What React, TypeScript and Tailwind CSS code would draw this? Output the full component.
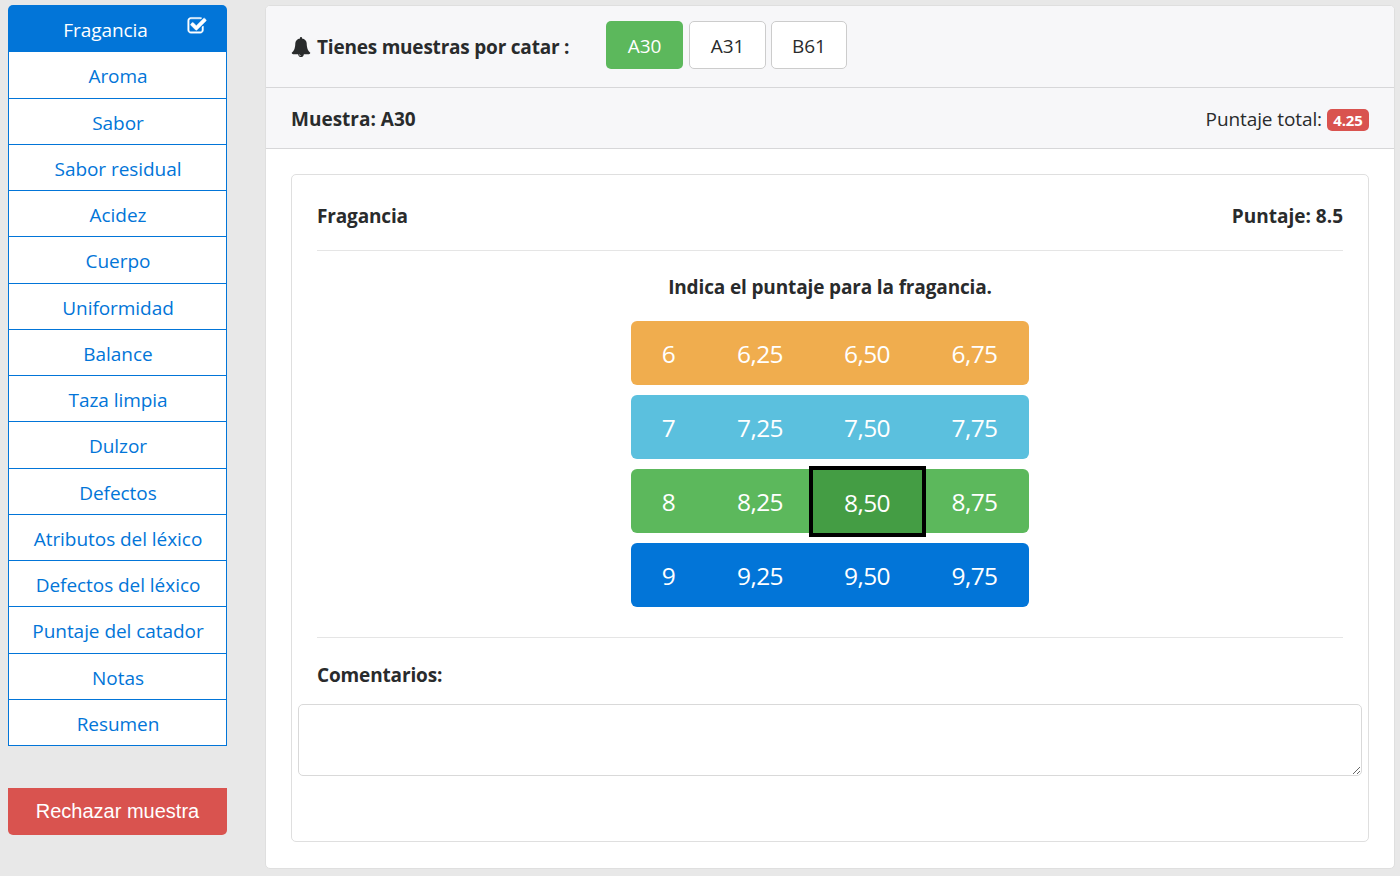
import React from "react";

const attributes = [
  "Aroma",
  "Sabor",
  "Sabor residual",
  "Acidez",
  "Cuerpo",
  "Uniformidad",
  "Balance",
  "Taza limpia",
  "Dulzor",
  "Defectos",
  "Atributos del léxico",
  "Defectos del léxico",
  "Puntaje del catador",
  "Notas",
  "Resumen",
];

const scores = [
  { color: "bg-[#f0ad4e]", values: ["6", "6,25", "6,50", "6,75"] },
  { color: "bg-[#5bc0de]", values: ["7", "7,25", "7,50", "7,75"] },
  { color: "bg-[#5cb85c]", values: ["8", "8,25", "8,50", "8,75"] },
  { color: "bg-[#0275d8]", values: ["9", "9,25", "9,50", "9,75"] },
];

function CheckIcon() {
  return (
    <svg
      viewBox="0 0 1792 1792"
      className="absolute top-[11px] right-[20px] size-5 fill-white stroke-white stroke-[40]"
    >
      <path d="M1472 930v318q0 119-84.5 203.5t-203.5 84.5h-832q-119 0-203.5-84.5t-84.5-203.5v-832q0-119 84.5-203.5t203.5-84.5h832q63 0 117 25 15 7 18 23 3 17-9 29l-49 49q-10 10-23 10-3 0-9-2-23-6-45-6h-832q-66 0-113 47t-47 113v832q0 66 47 113t113 47h832q66 0 113-47t47-113v-254q0-13 9-22l64-64q10-10 23-10 6 0 12 3 20 8 20 29zm231-489l-814 814q-24 24-57 24t-57-24l-430-430q-24-24-24-57t24-57l110-110q24-24 57-24t57 24l263 263 647-647q24-24 57-24t57 24l110 110q24 24 24 57t-24 57z" />
    </svg>
  );
}

function BellIcon() {
  return (
    <svg viewBox="0 0 1792 1792" className="size-5 fill-[#292b2c]">
      <path d="M912 1696q0-16-16-16-59 0-101.5-42.5t-42.5-101.5q0-16-16-16t-16 16q0 73 51.5 124.5t124.5 51.5q16 0 16-16zm816-288q0 52-38 90t-90 38h-448q0 106-75 181t-181 75-181-75-75-181h-448q-52 0-90-38t-38-90q50-42 91-88t85-119.5 74.5-158.5 50-206 19.5-260q0-152 117-282.5t307-158.5q-8-19-8-39 0-40 28-68t68-28 68 28 28 68q0 20-8 39 190 28 307 158.5t117 282.5q0 139 19.5 260t50 206 74.5 158.5 85 119.5 91 88z" />
    </svg>
  );
}

function Sidebar() {
  return (
    <aside className="w-[219px]">
      <nav className="flex flex-col text-center leading-[46px] tracking-[-0.05px]">
        <a className="relative h-[47.4px] rounded-t-[5px] bg-[#0275d8] pt-[2px] pr-[24px] text-white">
          Fragancia
          <CheckIcon />
        </a>
        {attributes.map((name) => (
          <a
            key={name}
            className="h-[46.25px] border-x border-b border-[#0275d8] bg-white pt-px pl-px text-[#0275d8]"
          >
            {name}
          </a>
        ))}
      </nav>
      <button className="mt-[42px] h-[47px] w-full rounded-b-[5px] bg-[#d9534f] pb-[2px] font-['Liberation_Sans',sans-serif] text-[20px] text-white">
        Rechazar muestra
      </button>
    </aside>
  );
}

function ScoreRow({ color, values }: { color: string; values: string[] }) {
  return (
    <div className={`grid h-16 w-[398px] grid-cols-[76px_107px_107px_108px] rounded-[6px] ${color}`}>
      {values.map((value) =>
        value === "8,50" ? (
          <button
            key={value}
            className="relative -mx-px mt-px h-[63px] bg-[#449d44] pt-[3px] pr-px text-center outline-4 outline-black"
          >
            {value}
          </button>
        ) : (
          <button key={value} className="pt-[2px] pr-px text-center">
            {value}
          </button>
        )
      )}
    </div>
  );
}

export default function App() {
  return (
    <div className="flex h-[876px] w-[1400px] gap-[38px] overflow-hidden bg-[#e8e8e8] pt-[5px] pl-2 font-['Open_Sans','Noto_Sans',sans-serif] text-[19px] text-[#292b2c]">
      <Sidebar />
      <main className="flex h-[864px] w-[1130px] flex-col rounded-[5px] border border-[#dfdfdf] bg-white">
        <header className="flex h-[82px] items-start rounded-t-[4px] border-b border-[#d7d7d9] bg-[#f7f7f9] pt-[15px] pl-[25px]">
          <div className="mt-[2px] flex h-12 w-[315px] items-center gap-[6px] font-bold tracking-[-0.21px]">
            <BellIcon />
            <span>Tienes muestras por catar :</span>
          </div>
          <div className="flex h-12 gap-[6px]">
            <button className="w-[77px] rounded-[5px] bg-[#5cb85c] pt-[2px] text-white">A30</button>
            <button className="w-[77px] rounded-[5px] border border-[#ccc] bg-white pt-[2px]">A31</button>
            <button className="-ml-px w-[76px] rounded-[5px] border border-[#ccc] bg-white pt-[2px]">B61</button>
          </div>
        </header>
        <div className="flex h-[61px] items-center justify-between border-b border-[#d7d7d9] bg-[#f7f7f9] px-[25px] pt-[2px]">
          <b className="font-bold">Muestra: A30</b>
          <div className="flex items-center gap-[5px] tracking-[-0.1px]">
            <span>Puntaje total:</span>
            <span className="mt-[2px] h-[22px] w-[42px] rounded-[5px] bg-[#d9534f] text-center text-[15px] leading-[23px] font-bold text-white">
              4.25
            </span>
          </div>
        </div>
        <section className="mx-[25px] mt-[25px] flex h-[668px] flex-col rounded-[5px] border border-[#dfdfdf]">
          <div className="mx-[25px] flex h-[76px] items-center justify-between border-b border-[#e5e5e5] pt-[7px] font-bold">
            <span className="tracking-[-0.15px]">Fragancia</span>
            <span>Puntaje: 8.5</span>
          </div>
          <div className="mx-[25px] flex h-[387px] flex-col items-center border-b border-[#e5e5e5]">
            <h4 className="mt-[22px] h-12 leading-[28px] font-bold tracking-[-0.14px]">
              Indica el puntaje para la fragancia.
            </h4>
            <div className="flex flex-col gap-[10px] text-[24.5px] tracking-[-0.6px] text-white">
              {scores.map((row) => (
                <ScoreRow key={row.color} {...row} />
              ))}
            </div>
          </div>
          <label className="mt-[23px] ml-[25px] h-[43px] leading-[28px] font-bold tracking-[-0.15px]">
            Comentarios:
          </label>
          <textarea className="mx-[6px] h-[72px] resize rounded-[5px] border border-[#d9d9d9] bg-white" />
        </section>
      </main>
    </div>
  );
}
